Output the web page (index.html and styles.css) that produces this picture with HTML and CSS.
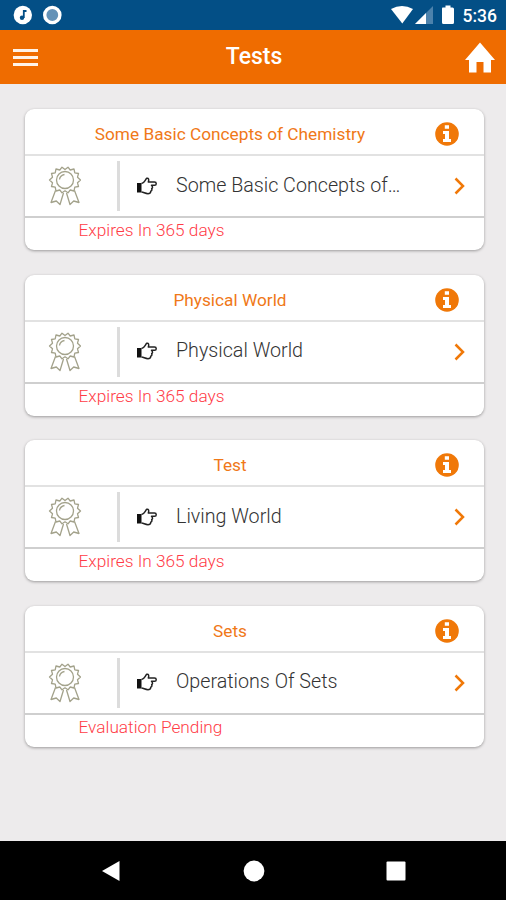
FILE: index.html
```
<!DOCTYPE html>
<html lang="en">
<head>
<meta charset="utf-8">
<title>Tests</title>
<link rel="stylesheet" href="styles.css">
</head>
<body>
<svg class="defs" width="0" height="0">
  <symbol id="award" viewBox="0 0 34 40">
    <g fill="none" stroke="#a3a28b" stroke-width="1.300" stroke-linejoin="round">
      <path d="M17 3.500L20 1.200L22.200 4L26 3L26.800 6.800L30.500 7.500L29.500 11.200L32.500 14L29.500 16.800L30.500 20.500L26.800 21.200L26 25L22.200 24L20 26.800L17 24.800L14 26.800L11.800 24L8 25L7.200 21.200L3.500 20.500L4.500 16.800L1.500 14L4.500 11.200L3.500 7.500L7.200 6.800L8 3L11.800 4L14 1.200Z"/>
      <circle cx="17" cy="14" r="8.500"/>
      <path d="M11.500 13.500Q12 9.500 16.500 8.500M7.500 24.500L3 36.500L8.300 35L12 38.500L15.500 27M26.500 24.500L31 36.500L25.700 35L22 38.500L18.500 27"/>
    </g>
  </symbol>
  <symbol id="hand" viewBox="0 0 20 18">
    <path d="M0 6H4.500V15.500H0Z" fill="#111"/>
    <path d="M4.500 6.500C7.500 6 8 3 9.700 1.300C11.500 0.800 12.300 2.500 11.300 5H17.500C19.800 5 19.800 8.300 17.500 8.300H14.500C16 9.500 15.700 11 14.700 11.500C15.300 13 14.500 14 13.700 14.200C13.800 16 12.500 16.700 11 16.700C8 16.700 7 15.200 4.500 15" fill="none" stroke="#222" stroke-width="1.500" stroke-linejoin="round"/>
  </symbol>
  <symbol id="info" viewBox="0 0 24 24">
    <circle cx="12" cy="12" r="11.800" fill="#f07808"/>
    <path d="M9.800 3.200H14V6.800H9.800ZM8 9H14V17H16V20H8V17H10V12H8Z" fill="#fff"/>
  </symbol>
  <symbol id="chevron" viewBox="0 0 12 18">
    <path d="M1.500 1.500L9 9L1.500 16.500" fill="none" stroke="#f07808" stroke-width="2.500"/>
  </symbol>
</svg>
<div class="status">
  <svg width="64" height="20" viewBox="0 0 64 20">
    <circle cx="9.800" cy="10" r="9.200" fill="#fff"/>
    <path d="M10.800 13V6H13.500" fill="none" stroke="#034f86" stroke-width="1.800"/>
    <circle cx="9" cy="12.800" r="2.200" fill="#034f86"/>
    <circle cx="39.300" cy="10" r="7.600" fill="#6492b7" stroke="#fff" stroke-width="3.400"/>
  </svg>
  <div class="status-right">
    <svg width="66" height="20" viewBox="0 0 66 20">
      <path d="M0 4Q11 -2 22 4L11.300 18.500Z" fill="#fff"/>
      <path d="M24 19L42 1V19Z" fill="#4c82ac"/>
      <path d="M24 19L35 8V19Z" fill="#fff"/>
      <path d="M51.500 2.500H54.500V0.500H59.500V2.500H61.500Q63 2.500 63 4V17.500Q63 19 61.500 19H52.500Q51 19 51 17.500V4Q51 2.500 51.500 2.500Z" fill="#fff"/>
    </svg>
    <span>5:36</span>
  </div>
</div>
<header class="bar">
  <div class="menu"><i></i><i></i><i></i></div>
  <h1>Tests</h1>
  <svg width="30" height="31" viewBox="0 0 30 31"><path d="M15 0.500L30 18H26V30.500H18.500V20H11.500V30.500H4V18H0Z" fill="#fff"/></svg>
</header>
<main>
  <section class="card">
    <div class="head"><h2>Some Basic Concepts of Chemistry</h2><svg class="info"><use href="#info"/></svg></div>
    <div class="row"><svg class="award"><use href="#award"/></svg><div class="rule"></div><svg class="hand"><use href="#hand"/></svg><p>Some Basic Concepts of…</p><svg class="chev"><use href="#chevron"/></svg></div>
    <div class="foot">Expires In 365 days</div>
  </section>
  <section class="card">
    <div class="head"><h2>Physical World</h2><svg class="info"><use href="#info"/></svg></div>
    <div class="row"><svg class="award"><use href="#award"/></svg><div class="rule"></div><svg class="hand"><use href="#hand"/></svg><p>Physical World</p><svg class="chev"><use href="#chevron"/></svg></div>
    <div class="foot">Expires In 365 days</div>
  </section>
  <section class="card">
    <div class="head"><h2>Test</h2><svg class="info"><use href="#info"/></svg></div>
    <div class="row"><svg class="award"><use href="#award"/></svg><div class="rule"></div><svg class="hand"><use href="#hand"/></svg><p>Living World</p><svg class="chev"><use href="#chevron"/></svg></div>
    <div class="foot">Expires In 365 days</div>
  </section>
  <section class="card">
    <div class="head"><h2>Sets</h2><svg class="info"><use href="#info"/></svg></div>
    <div class="row"><svg class="award"><use href="#award"/></svg><div class="rule"></div><svg class="hand"><use href="#hand"/></svg><p>Operations Of Sets</p><svg class="chev"><use href="#chevron"/></svg></div>
    <div class="foot">Evaluation Pending</div>
  </section>
</main>
<nav class="nav">
  <svg width="22" height="22" viewBox="0 0 22 22"><path d="M2 11L19.500 1V21Z" fill="#fff"/></svg>
  <svg width="22" height="22" viewBox="0 0 22 22"><circle cx="11" cy="11" r="10.400" fill="#fff"/></svg>
  <svg width="22" height="22" viewBox="0 0 22 22"><rect x="1.500" y="1.500" width="19" height="19" rx="1" fill="#fff"/></svg>
</nav>
</body>
</html>
```
FILE: styles.css
```
* { box-sizing: border-box; }
body {
  margin: 0;
  width: 506px;
  height: 900px;
  display: flex;
  flex-direction: column;
  overflow: hidden;
  background: #edebec;
  font-family: Roboto, "Liberation Sans", sans-serif;
}
svg { display: block; flex: none; }
.defs { position: absolute; }
h1, h2, p { margin: 0; }
.status {
  height: 30px;
  flex: none;
  display: flex;
  justify-content: space-between;
  padding: 5px 9px 0 13px;
  background: #034f86;
  color: #fff;
}
.status-right { display: flex; gap: 6px; }
.status-right span { font-size: 17.5px; font-weight: 500; line-height: 22px; }
.bar {
  height: 54px;
  flex: none;
  display: flex;
  justify-content: space-between;
  align-items: center;
  padding: 0 11px 0 13px;
  background: #ef6c00;
  color: #fff;
}
.bar h1 { font-size: 23px; font-weight: 500; line-height: 28px; padding: 0 0 0 5px; }
.menu { width: 25px; display: flex; flex-direction: column; gap: 4px; }
.menu i { height: 3px; background: #fff3e8; }
main {
  flex: 1;
  padding: 25px 22px 0 25px;
  display: flex;
  flex-direction: column;
  gap: 24.6px;
}
.card {
  height: 141px;
  background: #fff;
  border-radius: 9px;
  box-shadow: 0 1px 3px rgba(0, 0, 0, .35);
}
.head {
  height: 47px;
  display: flex;
  align-items: center;
  border-bottom: 2px solid #e2e2e2;
  padding: 5px 25px 0 0;
}
.head h2 {
  flex: 1;
  text-align: center;
  font-size: 17.25px;
  font-weight: 400;
  color: #f07818;
}
.info { width: 24px; height: 24px; }
.row {
  height: 62px;
  display: flex;
  align-items: center;
  border-bottom: 2px solid #cfcfcf;
  padding: 0 18px 0 23px;
}
.award { width: 34px; height: 40px; }
.rule { width: 3px; height: 50px; margin: 0 17px 0 35px; background: #dcdcdc; }
.hand { width: 20px; height: 18px; margin-bottom: 1px; }
.row p { flex: 1; padding: 0 0 2px 19px; font-size: 19.7px; font-weight: 300; color: #333; }
.chev { width: 12px; height: 18px; }
.foot {
  padding: 1px 0 0 53.5px;
  font-size: 17.25px;
  line-height: 22px;
  font-weight: 300;
  color: #ff3b46;
}
.nav {
  height: 59px;
  flex: none;
  display: flex;
  justify-content: space-between;
  padding: 19px 99px 0 100px;
  background: #000;
}
```
